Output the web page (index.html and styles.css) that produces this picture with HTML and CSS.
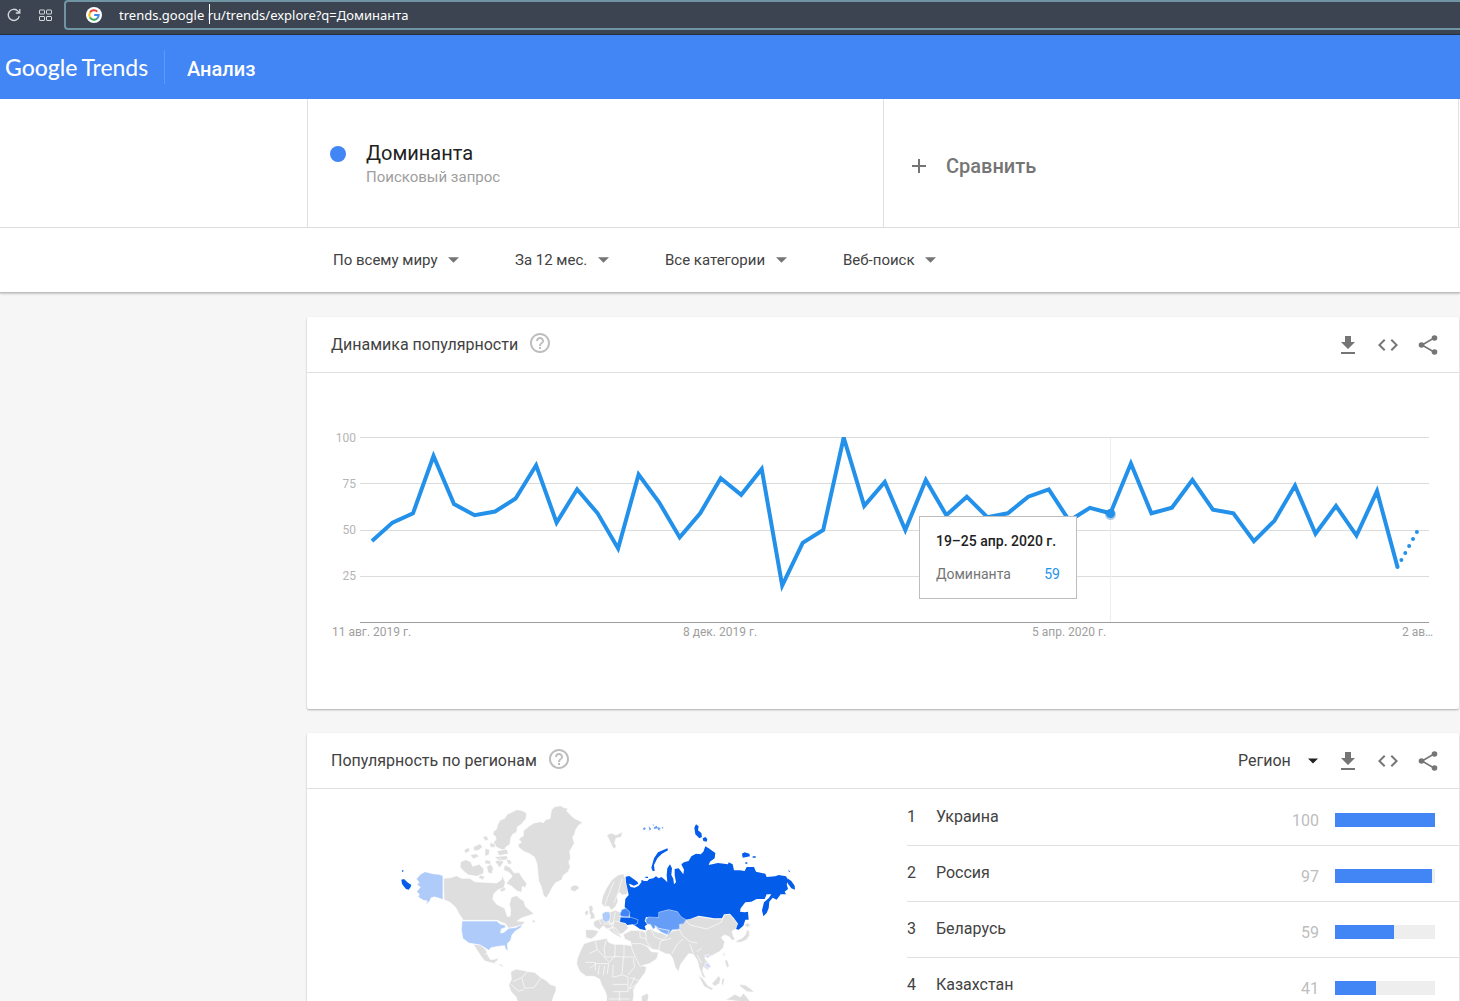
FILE: index.html
```html
<!DOCTYPE html>
<html lang="ru">
<head>
<meta charset="utf-8">
<meta name="viewport" content="width=device-width, initial-scale=1">
<title>Доминанта – Анализ – Google Trends</title>
<link rel="stylesheet" href="styles.css">
</head>
<body>
<svg class="sprite" aria-hidden="true">
  <symbol id="i-download" viewBox="0 0 24 24"><path d="M19 9h-4V3H9v6H5l7 7 7-7zM5 19v2h14v-2H5z"/></symbol>
  <symbol id="i-embed" viewBox="0 0 24 24"><path d="M9.4 16.6L4.8 12l4.6-4.6L8 6l-6 6 6 6 1.400-1.400zm5.200 0l4.600-4.600-4.600-4.600L16 6l6 6-6 6-1.400-1.400z"/></symbol>
  <symbol id="i-share" viewBox="0 0 24 24"><path d="M18 5 6 12l12 7" fill="none" stroke="currentColor" stroke-width="1.600"/><circle cx="18.500" cy="5" r="2.800"/><circle cx="5.500" cy="12" r="2.800"/><circle cx="18.500" cy="19" r="2.800"/></symbol>
  <symbol id="i-help" viewBox="0 0 24 24"><path d="M11 18h2v-2h-2v2zm1-16C6.480 2 2 6.480 2 12s4.480 10 10 10 10-4.480 10-10S17.520 2 12 2zm0 18c-4.410 0-8-3.590-8-8s3.590-8 8-8 8 3.590 8 8-3.590 8-8 8zm0-14c-2.210 0-4 1.790-4 4h2c0-1.100.9-2 2-2s2 .9 2 2c0 2-3 1.750-3 5h2c0-2.250 3-2.500 3-5 0-2.210-1.790-4-4-4z"/></symbol>
  <symbol id="i-arrow" viewBox="0 0 12 6"><path d="M0 0h12L6 6z"/></symbol>
</svg>

<div class="browser">
  <button class="browser-btn" aria-label="Обновить">
    <svg width="14" height="14" viewBox="0 0 14 14" fill="none" stroke="currentColor" stroke-width="1.300"><path d="M12.300 8.200A5.600 5.600 0 1 1 11 3.100L12.500 4.600"/><path d="M12.800 1v4H8.800"/></svg>
  </button>
  <button class="browser-btn" aria-label="Экспресс-панель">
    <svg width="13" height="13" viewBox="0 0 13 13" fill="none" stroke="currentColor"><rect x=".5" y="1" width="5" height="4" rx=".5"/><rect x="7.500" y="1" width="5" height="4" rx=".5"/><rect x=".5" y="7.500" width="5" height="4" rx=".5"/><rect x="7.500" y="7.500" width="5" height="4" rx=".5"/></svg>
  </button>
  <div class="address">
    <svg class="g-icon" width="16" height="16" viewBox="0 0 16 16"><circle cx="8" cy="8" r="8" fill="#fff"/><g fill="none" stroke-width="2"><path d="M11.300 4.600A4.700 4.700 0 0 0 4 5.600" stroke="#ea4335"/><path d="M4 5.600a4.700 4.700 0 0 0 0 4.800" stroke="#fbbc05"/><path d="M4 10.400a4.700 4.700 0 0 0 7.200 1.100" stroke="#34a853"/><path d="M11.200 11.500A4.700 4.700 0 0 0 12.700 8H8.200" stroke="#4285f4"/></g></svg>
    <div class="url-box">
      <input class="url" type="text" aria-label="Адрес" value="trends.google ru/trends/explore?q=Доминанта">
      <span class="caret"></span>
    </div>
  </div>
</div>

<header class="topbar">
  <a class="logo" href="#"><span class="logo-google">Google</span> <span class="logo-trends">Trends</span></a>
  <h1 class="section-name">Анализ</h1>
</header>

<div class="scroller">
<section class="terms">
  <div class="term">
    <span class="dot"></span>
    <div>
      <div class="term-name">Доминанта</div>
      <div class="term-type">Поисковый запрос</div>
    </div>
  </div>
  <button class="compare">
    <svg width="14" height="14" viewBox="0 0 14 14" stroke="currentColor" stroke-width="2"><path d="M7 0v14M0 7h14"/></svg>
    <span>Сравнить</span>
  </button>
</section>

<nav class="filters" aria-label="Фильтры">
  <span class="picker"><select aria-label="Регион поиска"><option>По всему миру</option></select><svg width="11" height="6"><use href="#i-arrow"/></svg></span>
  <span class="picker"><select aria-label="Период"><option>За 12 мес.</option></select><svg width="11" height="6"><use href="#i-arrow"/></svg></span>
  <span class="picker"><select aria-label="Категория"><option>Все категории</option></select><svg width="11" height="6"><use href="#i-arrow"/></svg></span>
  <span class="picker"><select aria-label="Тип поиска"><option>Веб-поиск</option></select><svg width="11" height="6"><use href="#i-arrow"/></svg></span>
</nav>

<main class="content">
  <section class="card">
    <div class="card-head">
      <h2>Динамика популярности</h2>
      <button class="help" aria-label="Справка"><svg width="24" height="24"><use href="#i-help"/></svg></button>
      <div class="actions">
        <button aria-label="Скачать"><svg width="24" height="24"><use href="#i-download"/></svg></button>
        <button aria-label="Встроить"><svg width="24" height="24"><use href="#i-embed"/></svg></button>
        <button aria-label="Поделиться"><svg width="24" height="24"><use href="#i-share"/></svg></button>
      </div>
    </div>
    <div class="chart">
      <svg class="plot" viewBox="0 0 1152 336" role="img" aria-label="Динамика популярности запроса">
        <clipPath id="area"><path d="M53 64h1069v186H53z"/></clipPath>
        <g class="grid"><path d="M53 64.500h1069M53 110.500h1069M53 157.500h1069M53 203.500h1069"/><path class="axis" d="M53 249.500h1069"/><path class="cursor" d="M803.500 65v184"/></g>
        <g class="ticks" text-anchor="end"><text x="49" y="69">100</text><text x="49" y="115">75</text><text x="49" y="161">50</text><text x="49" y="207">25</text></g>
        <g class="dates"><text x="25" y="263">11 авг. 2019 г.</text><text x="376" y="263">8 дек. 2019 г.</text><text x="725" y="263">5 апр. 2020 г.</text><text x="1095" y="263">2 ав…</text></g>
        <g clip-path="url(#area)"><path id="series" class="series"/><path id="forecast" class="series forecast"/></g>
        <circle class="halo" cx="803.500" cy="141.500" r="5.500"/><circle class="marker" cx="803.500" cy="140.500" r="4.500"/>
      </svg>
      <div class="tooltip">
        <div class="tooltip-date">19–25 апр. 2020 г.</div>
        <div class="tooltip-row"><span>Доминанта</span><span class="tooltip-value">59</span></div>
      </div>
    </div>
  </section>

  <section class="card">
    <div class="card-head">
      <h2>Популярность по регионам</h2>
      <button class="help" aria-label="Справка"><svg width="24" height="24"><use href="#i-help"/></svg></button>
      <div class="actions">
        <span class="picker region"><select aria-label="Масштаб"><option>Регион</option></select><svg width="10" height="6"><use href="#i-arrow"/></svg></span>
        <button aria-label="Скачать"><svg width="24" height="24"><use href="#i-download"/></svg></button>
        <button aria-label="Встроить"><svg width="24" height="24"><use href="#i-embed"/></svg></button>
        <button aria-label="Поделиться"><svg width="24" height="24"><use href="#i-share"/></svg></button>
      </div>
    </div>
    <div class="regions">
      <svg class="map" viewBox="0 0 600 224" role="img" aria-label="Карта мира">
        <g transform="translate(83 6) scale(.33333)">
          <g class="land">
            <path d="M484 45l10-10 18 -3 10 6 12 2-4 8 12 12 10 10 12 5 14 8-12 8-8 12-5 16-5 8 5 18-8 14-6 10 3 20-6 12 5 14-7 16-14 10-5 14-18 8-10 14-7 15-10 16-9-4-7-28-8-18-3-30-2-22-8-20-14-10-16-6-16-12-3-10 10-6-8-10 14-10 0-14 16-14 16-10 18-4 10 3 8-10 12-2z"/>
            <path d="M322 90l8-14 14-6 8-12 16-8 12-6 14 2 16 8-2 18-14 16-12 8-2 16-12 6-6 12-2 18-12 8-4 10-14-4-14-8-6-12 8-8-2-10-8-6 4-10 8-6z"/>
            <path d="M250 156l20-10 8 10-12 10-14 2zM222 165l14-8 4 12-14 6zM278 126l12-4 6 12-10 4zM240 180l18-4 10 8-18 8zM285 160l14 4-2 16-12 4zM300 142l16 6-2 10-14-2zM320 168l30-6 6 14-28 6zM285 194l18 4-2 10-16-2zM212 200l16-6 14 6 6 14 20-6 14 14-2 14-20 8-24-4-14-10-12-14zM290 215l12-8 8 12-4 18-12-4zM315 200l16-10 10 12-12 16zM268 240l16 4-4 10-14-4zM315 185l36-3 4 12-30 4z"/>
            <path d="M345 210l14 6 14 18 14-2 10 16 14 18-6 12-8-4-2 18-14-4-18-16-14-6 8-12 10-10-10-12-16-6 2-14zM348 192l14 4 4 10-12 2zM326 274l14-4 8 14-14 8z"/>
            <path d="M160 250L182 248L200 242L214 250L240 250L254 260L280 262L320 264L334 254L336 240L346 262L342 278L324 284L312 296L308 312L320 328L344 340L352 364L360 364L362 344L358 328L364 306L380 302L392 312L402 318L406 334L432 356L416 362L396 368L382 378L406 380L394 392L372 396L356 400L346 386L334 382L322 376L220 376L208 358L196 336L180 322L162 314ZM428 374l6 2 2 6-10 2z"/>
            <path d="M250 448L272 450L288 464L294 482L302 494L316 492L326 488L322 498L314 502L320 508L334 508L344 516L334 514L316 506L298 502L284 498L272 482L260 464Z"/>
            <path d="M362 530L378 522L398 526L416 530L434 532L450 546L468 556L480 568L498 574L498 588L490 606L482 640L390 640L378 606L362 588L356 570L364 554Z"/>
            <path d="M542 276l10-6 12 2 4 8-14 10-12-4zM584 352l6-6 6 2-1 10-9 4zM596 334l10-3 4 10-3 8 8 12-1 10-14 2 2-10-4-10z"/>
            <path d="M634 324L638 304L648 282L664 256L684 240L700 236L706 250L708 264L714 284L712 298L696 300L688 292L682 304L684 320L676 336L664 346L656 334L642 336ZM610 380L622 374L634 372L640 362L656 382L672 386L666 400L650 402L640 392L628 404L612 394ZM586 404L608 404L626 408L618 422L604 432L588 428ZM654 402L666 396L678 400L690 420L696 430L680 422L668 414ZM656 352L676 346L692 352L690 376L708 386L716 398L700 414L686 420L674 410L666 394L656 378ZM650 120L664 114L678 120L698 110L694 126L678 130L674 144L680 156L670 162L662 144Z"/>
            <path d="M582 446L606 438L650 430L656 442L672 448L696 448L728 452L740 484L752 510L770 516L766 532L748 556L730 584L732 598L726 634L648 634L650 604L646 590L636 572L628 552L612 544L588 544L570 530L560 508L562 490L572 466ZM754 604l18-10 4 10-6 30h-14z"/>
            <g transform="translate(600 0)">
              <path d="M100 418L124 406L150 406L166 412L172 404L184 402L196 410L214 414L232 422L246 408L268 404L270 390L286 376L326 364L372 372L396 372L404 358L420 358L432 372L444 388L438 402L426 408L430 424L436 434L426 436L416 424L402 420L394 428L404 440L400 458L388 470L366 482L352 486L344 488L350 498L362 514L354 526L340 516L338 528L348 550L338 546L328 520L322 496L310 478L296 476L284 492L272 508L266 530L256 518L248 490L240 478L226 476L206 466L184 462L170 452L184 470L206 472L200 492L178 506L150 514L138 490L126 462L122 440L104 432Z"/>
              <path d="M470 404l8 4 0 14-8 12-18 8-16 0 6-6 16-8 10-12zM462 388l12-4 8 6-10 8zM400 474l5-2-1 12-5-2zM366 566l20-24 6 8-4 16-14 8zM324 540l14 10 16 22 16 8-6 6-22-12zM404 496l8-2 6 20-8 4zM396 552l8-4-4 24-6-6zM448 568l18 2 20 14 6 8-20-2-20-14zM406 614l16-8 12-8 18 8 8-12 12 14 12 16z"/>
            </g>
          </g>
          <g class="borders"><path d="M648 436l-6 26 4 24 28 0 2-36M674 484l28 2 0-36M702 486l32 0M616 440l6 24-24 12M622 464l34 36M600 520l18-14 36 0 20-22M656 506l-4 30M670 510l-2 36M700 486l-4 54-26 6M730 490l4 26-20 24M640 540l4-28M624 540l4-28M698 540l16 6 0 44-44 0M720 548l26 8M668 568l44 0M734 546l-16 36 30-20M656 612l62 0M688 590l0 40M586 502l30 0 0 24M886 376l14 14 50 12 44-20 8-22M868 404l10 18 22 18 22 4M846 476l14-26 18-18M806 466l6-28 32-8M766 412l4 28 16 22M750 408l0 18 18 6M784 404l10 22 24 8 14-12M726 446l26 0 20 8M900 448l10 26M920 470l14-10M922 480l12 24M640 386l22 2 14-10 18 4M676 352l-8 36M644 334l10-30 18-44M672 324l12-30 12-42M626 374l8 14M370 560l24-12 18-16M396 550l8 30 28-2 20-28M362 568l24 20 16-4M284 478l10-4"/></g>
          <path class="low" d="M159 242L147 238L129 236L105 230L91 238L79 252L87 262L81 270L91 276L80 290L88 298L84 306L100 316L112 318L106 330L118 320L124 308L134 306L148 310L159 314ZM216 378L320 378L332 388L346 390L346 398L334 402L332 414L342 412L356 400L376 398L398 388L392 398L376 408L366 420L362 436L352 446L354 468L346 462L344 452L326 454L304 458L296 466L284 458L270 450L236 444L218 430L214 404ZM636 356l10-6 12 0 4 14-4 14-12 4-8-8z"/>
          <path class="low pale" d="M944 482l12-4 6 6-10 6zM946 504l10 0 8 12-10 4-10-8z"/>
          <path class="high" d="M34 254l8-2 10 10 12 8-2 6-6 8-8-2-8-10-4-6zM36 226l4 0 0 4-4 0z"/>
          <g transform="translate(600 0)">
            <path class="high" d="M107 245L118 243L142 260L145 266L132 272L122 268L116 266L122 276L134 278L146 272L154 262L160 258L172 258L178 252L190 250L198 244L206 250L214 246L222 252L232 262L230 240L232 220L240 208L246 220L244 240L250 252L252 268L258 262L254 240L254 222L266 220L280 238L282 224L274 208L282 202L296 198L304 184L318 176L332 178L340 170L346 154L356 160L376 174L374 190L360 200L356 210L384 204L414 208L416 202L428 208L432 226L450 226L464 228L470 216L492 216L498 230L526 236L530 246L556 244L566 240L588 244L596 258L590 268L594 282L584 290L588 298L572 298L560 314L548 308L538 320L536 340L530 354L520 364L516 346L522 322L536 310L544 298L530 298L524 312L500 312L484 320L466 322L452 340L450 350L464 352L474 350L476 374L466 374L460 392L446 404L438 402L444 386L432 370L420 356L402 358L396 370L372 370L350 366L326 362L300 372L286 374L270 364L262 350L236 344L208 352L210 366L190 370L168 366L164 378L172 388L164 394L168 406L150 402L136 392L128 388L112 390L106 384L90 380L92 366L120 368L118 350L104 336L106 312L116 300L112 280L108 262Z"/>
            <path class="high" d="M184 218L192 190L204 172L232 160L234 166L216 176L202 190L192 210L194 228L188 228ZM313 98L318 88L326 94L324 106L334 114L336 126L328 130L316 118ZM338 130L346 126L352 132L350 140L340 138ZM456 176L464 172L478 176L480 184L458 188ZM488 184h9v4h-9zM466 202h6v4h-6zM592 250L604 258L614 272L615 284L604 280L594 266ZM594 226l6 2-2 4zM154 256h6v6h-6zM166 245h8v4h-8z"/>
            <path class="high speck" d="M158 102l5-5 5 4-5 4zM176 94l8 8-5 5zM190 98l10-6 4 7-10 3zM204 97l8 2-5 8-4-5zM215 95l6 3-4 3zM188 88l5 2-4 2z"/>
            <path class="mid" d="M167 374L176 366L206 368L206 352L236 344L262 350L274 366L288 374L280 386L268 388L268 402L246 404L234 420L212 408L198 394L190 402L182 388L170 386Z"/>
            <path class="soft" d="M194 392L206 400L226 404L238 406L232 420L214 412L204 404Z"/>
            <path class="by" d="M90 358L96 344L108 340L120 352L116 366L94 364Z"/>
            <path class="ua-line" d="M90 368L120 366L144 374L142 386L130 390"/>
          </g>
        </g>
      </svg>
      <table class="ranking">
        <tr><td class="rank">1</td><td class="name">Украина</td><td class="value">100</td><td class="meter"><div class="bar"><div class="fill" style="width:100%"></div></div></td></tr>
        <tr><td class="rank">2</td><td class="name">Россия</td><td class="value">97</td><td class="meter"><div class="bar"><div class="fill" style="width:97%"></div></div></td></tr>
        <tr><td class="rank">3</td><td class="name">Беларусь</td><td class="value">59</td><td class="meter"><div class="bar"><div class="fill" style="width:59%"></div></div></td></tr>
        <tr><td class="rank">4</td><td class="name">Казахстан</td><td class="value">41</td><td class="meter"><div class="bar"><div class="fill" style="width:41%"></div></div></td></tr>
      </table>
    </div>
  </section>
</main>
</div>
<script src="chart.js"></script>
</body>
</html>
```
FILE: chart.js
```js
// Weekly interest values, 0–100; the last one is still incomplete.
const values = [44, 54, 59, 90, 64, 58, 60, 67, 85, 54, 72, 59, 40, 80, 65, 46, 59, 78, 69, 83, 20, 43, 50,
  100, 63, 76, 50, 77, 58, 68, 57, 59, 68, 72, 55, 62, 59, 86, 59, 62, 77, 61, 59, 44, 55, 74, 48, 63, 47, 71, 30, 50];
const first = 65, step = 20.51, base = 249.5, unit = 1.85;
const points = values.map((v, i) => (first + i * step).toFixed(1) + ' ' + (base - v * unit).toFixed(1));
document.getElementById('series').setAttribute('d', 'M' + points.slice(0, -1).join('L'));
document.getElementById('forecast').setAttribute('d', 'M' + points.slice(-2).join('L'));
```
FILE: styles.css
```css
* { box-sizing: border-box; }
html, body { height: 100%; }
body {
  margin: 0;
  display: flex;
  flex-direction: column;
  background: #f6f6f6;
  color: #212121;
  font-family: Roboto, "Liberation Sans", sans-serif;
}
button {
  margin: 0;
  padding: 0;
  border: 0;
  background: none;
  color: inherit;
  font: inherit;
  cursor: pointer;
}
svg { display: block; fill: currentColor; }
.sprite { position: absolute; width: 0; height: 0; }

/* Browser bar */
.browser {
  flex: none;
  display: flex;
  height: 35px;
  padding-left: 7px;
  background: #3b4450;
  border-bottom: 1px solid #26303c;
  color: #d5dade;
}
.browser-btn { height: 30px; }
.browser-btn + .browser-btn { margin: 0 12px 0 18px; }
.browser-btn svg { fill: none; }
.address {
  flex: 1;
  display: flex;
  align-items: center;
  height: 30px;
  gap: 17px;
  padding-left: 20px;
  border: 2px solid #6f94a3;
  border-right: 0;
  border-radius: 4px 0 0 4px;
}
.url-box { position: relative; flex: 1; }
.url {
  display: block;
  width: 100%;
  height: 22px;
  padding: 0;
  border: 0;
  outline: 0;
  background: none;
  color: #fff;
  font: 13px "Noto Sans", "Open Sans", sans-serif;
}
.caret { position: absolute; left: 90px; top: 0; width: 1px; height: 20px; background: #fff; }

/* Site header */
.topbar {
  flex: none;
  display: flex;
  align-items: center;
  height: 64px;
  padding-left: 5px;
  background: #4285f4;
  color: #fff;
}
.logo {
  display: flex;
  gap: 4px;
  width: 160px;
  height: 34px;
  border-right: 1px solid #5f98f6;
  color: #fff;
  font: 23px/34px Lato, sans-serif;
  text-decoration: none;
}
.logo-google { font-weight: 500; }
.section-name { margin: 0; padding: 4px 0 0 22px; font-size: 20px; line-height: 24px; font-weight: 500; }

.scroller { flex: 1; min-height: 0; overflow-y: auto; scrollbar-width: none; }

/* Search terms */
.terms {
  display: grid;
  grid-template-columns: 1fr 1fr;
  padding: 0 1px 0 307px;
  background: #fff;
  border-bottom: 1px solid #e0e0e0;
}
.term {
  display: flex;
  gap: 20px;
  height: 128px;
  padding: 42px 22px 0;
  border-left: 1px solid #e0e0e0;
}
.dot { width: 16px; height: 16px; margin-top: 5px; border-radius: 50%; background: #4285f4; }
.term-name { font-size: 20px; line-height: 24px; }
.term-type { font-size: 15px; line-height: 24px; color: #9e9e9e; }
.compare {
  display: flex;
  align-items: center;
  gap: 20px;
  padding: 5px 28px 0;
  border: solid #e0e0e0;
  border-width: 0 1px;
  color: #757575;
  font-size: 20px;
  font-weight: 500;
}

/* Filters */
.filters {
  position: relative;
  display: flex;
  align-items: center;
  gap: 56px;
  height: 65px;
  padding-left: 333px;
  background: #fff;
  border-bottom: 1px solid #bdbdbd;
  box-shadow: 0 1px 2px rgba(0, 0, 0, .2);
}
.picker { display: flex; align-items: center; gap: 10px; color: #757575; }
.picker select {
  appearance: none;
  padding: 0;
  border: 0;
  background: none;
  color: #424242;
  font: 15px/20px Roboto, sans-serif;
}

/* Cards */
.content { display: grid; gap: 24px; padding: 24px 1px 0 307px; }
.card { background: #fff; border-radius: 2px; box-shadow: 0 1px 2px rgba(0, 0, 0, .3); }
.card-head {
  display: flex;
  align-items: center;
  height: 56px;
  padding: 0 19px 0 24px;
  border-bottom: 1px solid #e0e0e0;
}
.card-head h2 { margin: 0; font-size: 16px; line-height: 24px; font-weight: 400; color: #424242; }
.help { margin: 0 0 4px 10px; color: #bdbdbd; }
.actions { display: flex; align-items: center; gap: 16px; margin-left: auto; color: #757575; }
.card-head .region { gap: 17px; margin-right: 2px; color: #212121; }
.card-head .region select { font-size: 16px; }

/* Timeline */
.chart { position: relative; }
.plot { width: 100%; height: auto; font-size: 12px; }
.grid path { fill: none; stroke: #dcdcdc; }
.grid .axis { stroke: #9e9e9e; }
.grid .cursor { stroke: #eee; }
.ticks { fill: #b5b5b5; }
.dates { fill: #9e9e9e; }
.series { fill: none; stroke: #2391ea; stroke-width: 4; }
.forecast { stroke-dasharray: 0 8; stroke-linecap: round; }
.marker { fill: #2391ea; }
.halo { fill: #1d6fb5; opacity: .35; }
.tooltip {
  position: absolute;
  left: 53.12%;
  top: 42.6%;
  width: 158px;
  padding: 14px 16px;
  background: #fff;
  border: 1px solid #bdbdbd;
  font-size: 14px;
  line-height: 20px;
}
.tooltip-date { font-weight: 500; margin-bottom: 13px; }
.tooltip-row { display: flex; justify-content: space-between; color: #757575; }
.tooltip-value { color: #2391ea; }

/* Regions */
.regions { display: grid; grid-template-columns: 600fr 552fr; align-items: start; }
.map { width: 100%; height: auto; }
.land, .low, .mid, .soft, .by { stroke: #fff; stroke-width: 2; stroke-linejoin: round; }
.land { fill: #dedede; }
.borders { fill: none; stroke: #fff; stroke-width: 2; }
.low { fill: #aecbfa; }
.pale { fill: #d7d9f7; }
.high { fill: #045cea; }
.speck { opacity: .6; }
.mid { fill: #669df6; stroke: #a8c7fa; }
.soft { fill: #83b0f8; }
.by { fill: #4285f4; stroke: #a8c7fa; }
.ua-line { fill: none; stroke: #a8c7fa; stroke-width: 2; }
.ranking { width: 100%; border-collapse: collapse; font-size: 16px; line-height: 24px; }
.ranking td { height: 56px; padding: 0; border-bottom: 1px solid #e0e0e0; }
.ranking .rank { width: 29px; color: #424242; }
.ranking .name { color: #424242; }
.ranking .value { width: 60px; padding: 8px 16px 0 0; text-align: right; color: #bdbdbd; }
.ranking .meter { width: 124px; padding: 6px 24px 0 0; }
.bar { height: 14px; background: #eee; }
.fill { height: 14px; background: #4285f4; }
```
